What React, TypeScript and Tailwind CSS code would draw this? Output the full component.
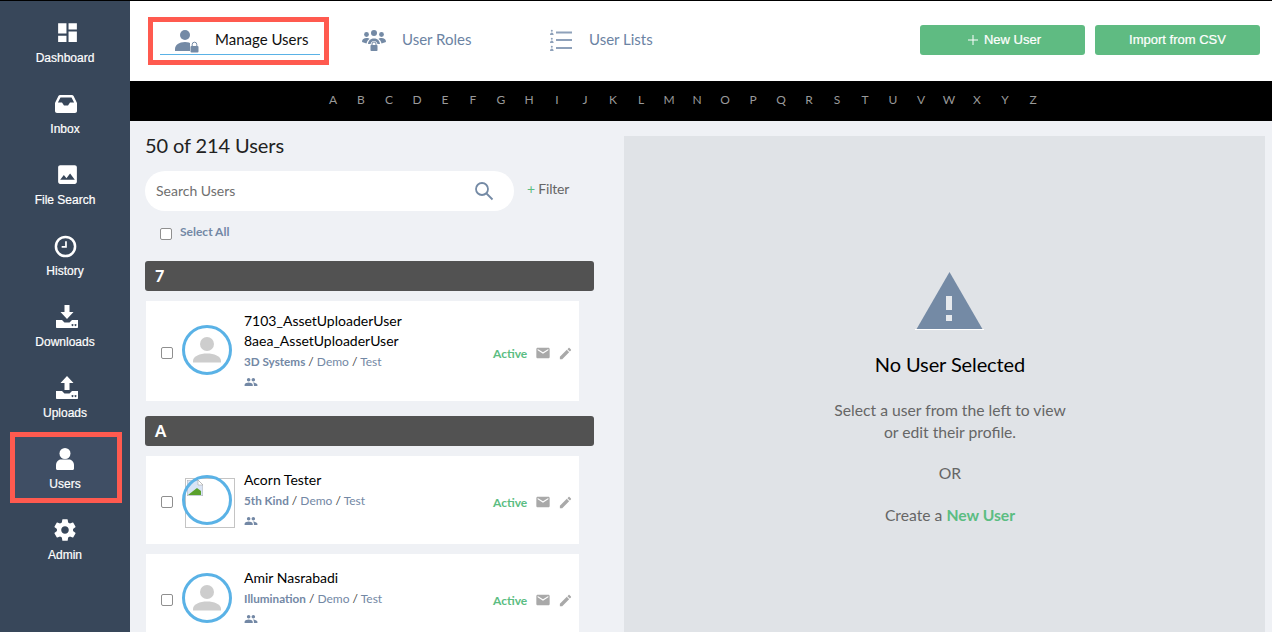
import React from "react";

const P: Record<string, string> = {
  dash: "M3 13h8V3H3v10zm0 8h8v-6H3v6zm10 0h8V11h-8v10zm0-18v6h8V3h-8z",
  inbox: "M6.2 3h11.6c.8 0 1.4.4 1.8 1.1L23 11v8c0 1.1-.9 2-2 2H3c-1.1 0-2-.9-2-2v-8l3.4-6.9C4.8 3.400 5.400 3 6.200 3zM6.500 5.500 3.900 10.500H8l2 3h4l2-3h4.100l-2.600-5z",
  image: "M21 19V5c0-1.100-.9-2-2-2H5c-1.100 0-2 .9-2 2v14c0 1.100.9 2 2 2h14c1.100 0 2-.9 2-2zM8.500 12.500l2.500 3 3.500-4.500 4.500 6H5l3.500-4.500z",
  mail: "M20 4H4c-1.100 0-1.990.9-1.990 2L2 18c0 1.100.9 2 2 2h16c1.100 0 2-.9 2-2V6c0-1.100-.9-2-2-2zm0 4l-8 5-8-5V6l8 5 8-5v2z",
  edit: "M3 17.250V21h3.750L17.810 9.940l-3.750-3.750L3 17.250zM20.710 7.040c.39-.39.39-1.020 0-1.410l-2.340-2.340c-.39-.39-1.020-.39-1.410 0l-1.830 1.830 3.750 3.750 1.830-1.830z",
  group: "M16 11c1.660 0 2.990-1.340 2.990-3S17.660 5 16 5c-1.660 0-3 1.340-3 3s1.340 3 3 3zm-8 0c1.660 0 2.990-1.340 2.990-3S9.660 5 8 5C6.340 5 5 6.340 5 8s1.340 3 3 3zm0 2c-2.330 0-7 1.170-7 3.500V19h14v-2.500c0-2.330-4.670-3.500-7-3.500zm8 0c-.29 0-.62.02-.97.05 1.160.84 1.970 1.970 1.970 3.450V19h6v-2.500c0-2.330-4.670-3.500-7-3.500z",
  gear: "M19.400 13c.04-.33.06-.66.06-1s-.02-.67-.06-1l2.130-1.650c.19-.15.24-.42.12-.64l-2-3.460c-.12-.22-.39-.3-.61-.22l-2.490 1c-.52-.4-1.080-.73-1.690-.98l-.38-2.650C14.460 2.180 14.250 2 14 2h-4c-.25 0-.46.18-.49.42l-.38 2.650c-.61.25-1.170.59-1.690.98l-2.490-1c-.23-.09-.49 0-.61.22l-2 3.460c-.13.22-.07.49.12.64L4.590 11c-.04.33-.07.67-.07 1s.03.67.07 1l-2.130 1.650c-.19.15-.24.42-.12.64l2 3.460c.12.22.39.3.61.22l2.490-1c.52.4 1.080.73 1.690.98l.38 2.650c.03.24.24.42.49.42h4c.25 0 .46-.18.49-.42l.38-2.650c.61-.25 1.170-.59 1.690-.98l2.490 1c.23.09.49 0 .61-.22l2-3.460c.12-.22.07-.49-.12-.64L19.400 13zM12 15.500c-1.930 0-3.500-1.570-3.500-3.500s1.570-3.500 3.500-3.500 3.500 1.570 3.500 3.500-1.570 3.500-3.500 3.500z",
};

function Ic({ d, className }: { d: string; className?: string }) {
  return (
    <svg viewBox="0 0 24 24" fill="currentColor" fillRule="evenodd" className={className}>
      <path d={d} />
    </svg>
  );
}

function Tray({ up }: { up?: boolean }) {
  return (
    <svg viewBox="0 0 24 24" fill="currentColor" className="w-6 h-6 ml-[3px]">
      {up ? <path d="M12 0 5.500 7H9.500v7h5V7h4z" /> : <path d="M9.500 0v7H5.500l6.500 7 6.500-7h-4V0z" />}
      <path fillRule="evenodd" d="M1 15h6l2.500 2.500h5L17 15h6v7c0 .6-.4 1-1 1H2c-.6 0-1-.4-1-1zM17.500 19a1 1 0 1 0 .01 0zM20.500 19a1 1 0 1 0 .01 0z" />
    </svg>
  );
}

const nav: [string, React.ReactNode][] = [
  ["Dashboard", <Ic d={P.dash} className="w-[25px] h-[25px] ml-[4px]" />],
  ["Inbox", <Ic d={P.inbox} className="w-6 h-6 ml-px" />],
  ["File Search", <Ic d={P.image} className="w-[25px] h-[25px] ml-[4px]" />],
  ["History", (
    <svg viewBox="0 0 24 24" fill="none" stroke="currentColor" className="w-[23px] h-[23px] ml-px mt-[2px]">
      <circle cx="12" cy="12" r="10" strokeWidth="2.600" />
      <path d="M12.500 6.500v6H8" strokeWidth="1.800" />
    </svg>
  )],
  ["Downloads", <Tray />],
  ["Uploads", <Tray up />],
  ["Users", (
    <svg viewBox="0 0 24 24" fill="currentColor" className="w-6 h-6">
      <circle cx="12" cy="6.500" r="5.500" />
      <path d="M3.500 23c-.8 0-1.500-.7-1.500-1.500V18c0-3 2.500-5.500 5.500-5.500h9c3 0 5.500 2.500 5.500 5.500v3.500c0 .8-.7 1.500-1.500 1.500z" transform="translate(1.200 0) scale(.9 1)" />
    </svg>
  )],
  ["Admin", <Ic d={P.gear} className="w-[26px] h-[26px]" />],
];

function Sidebar() {
  return (
    <aside className="w-[130px] shrink-0 bg-[#38475a] text-white flex flex-col pt-[19px] font-['Liberation_Sans',sans-serif]">
      {nav.map(([label, icon]) => {
        const active = label === "Users";
        return (
          <div key={label} className="relative h-[71px] flex flex-col items-center">
            {active && (
              <div className="absolute left-[10px] right-[8px] top-[-14px] h-[71px] border-[5px] border-[#ff5a4f] bg-[#3f4e64]" />
            )}
            <div className="relative h-[25px] flex items-center justify-center">{icon}</div>
            <div className="relative mt-[5px] text-[12px] leading-[16px] [-webkit-text-stroke:0.2px_white]">{label}</div>
          </div>
        );
      })}
    </aside>
  );
}

function UserLock() {
  return (
    <svg viewBox="0 0 24 24" className="w-[24px] h-[24px] mt-[2px] text-[#748aa5]" fill="currentColor">
      <circle cx="10" cy="6" r="5" />
      <path d="M0 20c0-4 4-7 10-7 3 0 5 .7 7 2v7H0z" />
      <path fill="#fff" d="M15 14h9v10h-9z" />
      <rect x="15.500" y="17" width="8" height="6.500" rx="1" />
      <path d="M17.200 17v-1.500a2.300 2.300 0 0 1 4.600 0V17" fill="none" stroke="currentColor" strokeWidth="1" />
    </svg>
  );
}

function RolesIcon() {
  return (
    <svg viewBox="0 0 24 24" className="w-[24px] h-[24px] text-[#748aa5]" fill="currentColor">
      <circle cx="12" cy="5" r="3" />
      <circle cx="4.500" cy="6.500" r="2.400" />
      <circle cx="19.500" cy="6.500" r="2.400" />
      <path d="M0 14c0-3 2-4 4.500-4 1.500 0 2.500.4 3 1-1.500 1-2.500 2-3 4.500z" />
      <path d="M24 14c0-3-2-4-4.500-4-1.500 0-2.500.4-3 1 1.500 1 2.500 2 3 4.500z" />
      <path d="M6 16c.5-4 3-5.500 6-5.500s5.500 1.500 6 5.500l-2.500 0c-.5-2-2-3-3.500-3s-3 1-3.500 3z" />
      <rect x="8.500" y="17" width="7" height="6" rx=".8" />
      <path d="M10 17v-1a2 2 0 0 1 4 0v1" fill="none" stroke="currentColor" />
    </svg>
  );
}

function ListIcon() {
  return (
    <svg viewBox="0 0 24 24" className="w-[24px] h-[24px] text-[#8ea1ba]" fill="currentColor">
      <rect x="7" y="3.500" width="16" height="2" />
      <rect x="7" y="11" width="16" height="2" />
      <rect x="7" y="19" width="16" height="2" />
      <circle cx="2.800" cy="2.800" r="1" />
      <path d="M1 7c0-1.500.8-2.500 1.800-2.500S4.600 5.500 4.600 7z" />
      <circle cx="2.800" cy="10.800" r="1" />
      <path d="M1 15c0-1.500.8-2.500 1.800-2.500S4.600 13.500 4.600 15z" />
      <circle cx="2.800" cy="18.800" r="1" />
      <path d="M1 23c0-1.500.8-2.500 1.800-2.500S4.600 21.500 4.600 23z" />
    </svg>
  );
}

function TopBar() {
  return (
    <header className="h-[80px] bg-white flex items-center shrink-0">
      <div className="ml-[18px] w-[181px] h-[48px] border-[5px] border-[#ff5a4f] pl-[7px] pr-[4px] pt-[3px] flex items-start">
        <div className="w-full h-[30px] border-b border-[#5ab2e6] flex items-center pl-[15px]">
          <UserLock />
          <span className="ml-[16px] text-[15px] text-[#111]">Manage Users</span>
        </div>
      </div>
      <div className="ml-[33px] -mt-[2px] flex items-center w-[187px]">
        <RolesIcon />
        <span className="ml-[16px] -mt-[2px] text-[15px] text-[#6b83a3]">User Roles</span>
      </div>
      <div className="-mt-[2px] flex items-center">
        <ListIcon />
        <span className="ml-[16px] -mt-[2px] text-[15px] text-[#6b83a3]">User Lists</span>
      </div>
      <div className="ml-auto mr-[12px] -mt-[3px] flex gap-[10px] font-['Liberation_Sans',sans-serif] text-[13px] text-white [-webkit-text-stroke:0.2px_white]">
        <button className="w-[165px] h-[30px] rounded-[3px] bg-[#5fbb82] flex items-center justify-center pl-[4px]">
          <svg viewBox="0 0 10 10" className="w-[10px] h-[10px] mr-[6px]" stroke="currentColor" strokeWidth="1">
            <path d="M5 0v10M0 5h10" />
          </svg>
          New User
        </button>
        <button className="w-[165px] h-[30px] rounded-[3px] bg-[#5fbb82]">Import from CSV</button>
      </div>
    </header>
  );
}

function Alpha() {
  return (
    <div className="h-[40px] bg-black shrink-0 pl-[189px] pb-[2px] flex items-center text-[12px] text-[#9a9a9a]">
      {"ABCDEFGHIJKLMNOPQRSTUVWXYZ".split("").map((c) => (
        <span key={c} className="w-[28px] text-center">{c}</span>
      ))}
    </div>
  );
}

function Check() {
  return <input type="checkbox" className="appearance-none block w-[12px] h-[12px] rounded-[2px] bg-white border border-[#8f8f8f] shrink-0" />;
}

function Avatar({ broken }: { broken?: boolean }) {
  if (broken) {
    return (
      <div className="relative w-[50px] h-[50px]">
        <div className="absolute left-[3px] top-[3px] w-[50px] h-[50px] border border-[#c4c4c4]">
          <svg viewBox="0 0 16 16" className="w-[16px] h-[16px] ml-[1px] mt-[1px]">
            <path d="M0 0h11l5 5v11H0z" fill="#d9e4f5" stroke="#a8a8a8" strokeWidth=".8" />
            <path d="M1 15l9-7 4 3v4z" fill="#5aa02c" />
            <path d="M11 0v5h5z" fill="#fff" stroke="#a8a8a8" strokeWidth=".6" />
          </svg>
        </div>
        <div className="absolute inset-0 rounded-full border-[3px] border-[#5ab2e6]" />
      </div>
    );
  }
  return (
    <div className="w-[50px] h-[50px] rounded-full border-[3px] border-[#5ab2e6] bg-white overflow-hidden flex items-center justify-center">
      <svg viewBox="0 0 50 50" className="w-[50px] h-[50px] shrink-0" fill="#cdcdcd">
        <circle cx="25" cy="19" r="7" />
        <path d="M11 36c0-5 7-7.500 14-7.500S39 31 39 36v1.500H11z" />
      </svg>
    </div>
  );
}

function Card({ names, org, h, ring, broken }: { names: string[]; org: string; h: string; ring: string; broken?: boolean }) {
  return (
    <div className={"ml-px w-[433px] bg-white flex items-center pl-[15px] " + h}>
      <div className="mt-[4px]"><Check /></div>
      <div className={"ml-[9px] " + ring}>
        <Avatar broken={broken} />
      </div>
      <div className="ml-[12px] flex-1 min-w-0">
        {names.map((n) => (
          <div key={n} className="text-[14px] leading-[20px] text-black">{n}</div>
        ))}
        <div className="text-[12px] leading-[20px] text-[#7388a5]">
          <span className="font-bold text-[11.7px]">{org}</span> <span className="text-[#444]">/</span> Demo <span className="text-[#444]">/</span> Test
        </div>
        <div className="h-[20px] flex items-center">
          <Ic d={P.group} className="w-[14px] h-[14px] text-[#7388a5]" />
        </div>
      </div>
      <div className="flex items-center pr-[6px] mt-[4px]">
        <span className="mt-[1px] text-[12px] font-bold text-[#5bbd82] w-[42px]">Active</span>
        <Ic d={P.mail} className="w-[16px] h-[16px] text-[#a9a9a9]" />
        <Ic d={P.edit} className="ml-[7px] w-[15px] h-[15px] text-[#a9a9a9]" />
      </div>
    </div>
  );
}

function Section({ label }: { label: string }) {
  return (
    <div className="h-[30px] bg-[#525252] rounded-[3px] flex items-center pl-[10px] text-[16px] font-black text-white">
      {label}
    </div>
  );
}

function ListPane() {
  return (
    <div className="w-[449px] shrink-0 ml-[15px]">
      <h1 className="mt-[11px] h-[26px] text-[20px] leading-[26px] tracking-[-0.1px] text-[#222]">50 of 214 Users</h1>
      <div className="mt-[13px] flex items-center">
        <div className="w-[369px] h-[40px] rounded-full bg-white flex items-center pl-[11px] pr-[20px] justify-between">
          <span className="-mt-[2px] text-[14px] text-[#6f6f6f]">Search Users</span>
          <svg viewBox="0 0 20 20" className="w-[20px] h-[20px] text-[#748aa5]" fill="none" stroke="currentColor" strokeWidth="1.800">
            <circle cx="8" cy="8" r="6" />
            <path d="M12.500 12.500 18.500 18.500" />
          </svg>
        </div>
        <div className="ml-[13px] -mt-[5px] text-[14px] tracking-[-0.2px] text-[#666]"><span className="text-[#5bbd82]">+</span> Filter</div>
      </div>
      <div className="mt-[11px] flex items-start pl-[15px] h-[39px]">
        <div className="mt-[6px]"><Check /></div>
        <span className="ml-[8px] mt-[2px] text-[12px] leading-[16px] font-bold text-[#7388a5]">Select All</span>
      </div>
      <Section label="7" />
      <div className="mt-[10px]">
        <Card names={["7103_AssetUploaderUser", "8aea_AssetUploaderUser"]} org="3D Systems" h="h-[100px]" ring="-mt-[2px]" />
      </div>
      <div className="mt-[15px]"><Section label="A" /></div>
      <div className="mt-[10px]">
        <Card names={["Acorn Tester"]} org="5th Kind" h="h-[88px]" ring="" broken />
      </div>
      <div className="mt-[10px] h-[100px]">
        <Card names={["Amir Nasrabadi"]} org="Illumination" h="h-[88px]" ring="" />
      </div>
    </div>
  );
}

function DetailPane() {
  return (
    <div className="mt-[15px] ml-[30px] w-[641px] pl-[11px] bg-[#e0e3e7] flex flex-col items-center">
      <svg viewBox="0 0 70 58" className="mt-[136px] w-[70px] h-[58px]">
        <path d="M34.500 0 1 58h67z" fill="#748aa5" />
        <path d="M0 57.500h69" stroke="#fff" strokeWidth="1" />
        <rect x="31" y="24" width="6" height="14" fill="#e6e9ed" />
        <rect x="31" y="43" width="6" height="6" fill="#e6e9ed" />
      </svg>
      <h2 className="mt-[21px] text-[20px] leading-[26px] tracking-[-0.1px] text-black">No User Selected</h2>
      <div className="mt-[22px] text-center text-[15.7px] leading-[22px] text-[#666]">
        <div>Select a user from the left to view</div>
        <div>or edit their profile.</div>
      </div>
      <div className="mt-[19px] text-[15.7px] leading-[22px] text-[#666]">OR</div>
      <div className="mt-[20px] text-[15.7px] leading-[22px] text-[#666]">
        Create a <span className="font-bold text-[#5bbd82]">New User</span>
      </div>
    </div>
  );
}

export default function App() {
  return (
    <div className="w-[1272px] h-[632px] overflow-hidden flex flex-col font-['Lato',sans-serif]">
      <div className="h-px bg-black shrink-0" />
      <div className="flex flex-1 min-h-0">
        <Sidebar />
        <main className="flex-1 min-w-0 flex flex-col bg-[#eff1f5]">
          <TopBar />
          <Alpha />
          <div className="flex flex-1 min-h-0 overflow-hidden">
            <ListPane />
            <DetailPane />
          </div>
        </main>
      </div>
    </div>
  );
}
